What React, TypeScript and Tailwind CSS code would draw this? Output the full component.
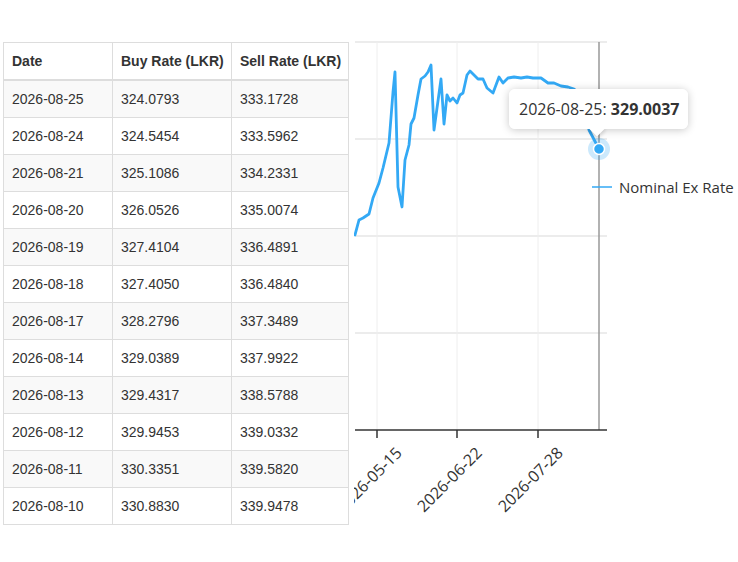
import React from "react";

const rows: [string, string, string][] = [
  ["2026-08-25", "324.0793", "333.1728"],
  ["2026-08-24", "324.5454", "333.5962"],
  ["2026-08-21", "325.1086", "334.2331"],
  ["2026-08-20", "326.0526", "335.0074"],
  ["2026-08-19", "327.4104", "336.4891"],
  ["2026-08-18", "327.4050", "336.4840"],
  ["2026-08-17", "328.2796", "337.3489"],
  ["2026-08-14", "329.0389", "337.9922"],
  ["2026-08-13", "329.4317", "338.5788"],
  ["2026-08-12", "329.9453", "339.0332"],
  ["2026-08-11", "330.3351", "339.5820"],
  ["2026-08-10", "330.8830", "339.9478"],
];

const pts: [number, number][] = [
  [354, 235], [358, 220], [362, 218], [368, 214], [372, 198], [378, 183], [382, 168],
  [388, 143], [392, 92], [394, 72], [397, 187], [401, 207], [404, 160], [408, 145],
  [410, 124], [413, 118], [417, 95], [420, 79], [424, 76], [427, 72], [430, 65],
  [433, 130], [440, 79], [443, 124], [446, 95], [449, 101], [452, 98], [456, 103],
  [459, 95], [462, 93], [466, 75], [469, 71], [475, 77], [477, 79], [482, 79],
  [486, 88], [492, 93], [498, 77], [502, 83], [507, 78], [513, 77], [520, 78],
  [526, 77], [532, 78], [540, 78], [547, 83], [553, 83], [560, 86], [567, 87],
  [573, 89], [580, 95], [585, 115], [588, 130], [598, 149],
];

const ticks: [number, string][] = [
  [376, "2026-05-15"],
  [456, "2026-06-22"],
  [537, "2026-07-28"],
];

export default function App() {
  const cell = "border border-[#dddddd] px-[8px] py-[8px] leading-[20px] text-left whitespace-nowrap";
  return (
    <div className="relative w-[738px] h-[562px] bg-white flex items-start overflow-hidden text-[#333333] font-['Liberation_Sans',Arial,sans-serif] text-[14px]">
      <table className="ml-[3px] mt-[42px] border-collapse table-fixed w-[345px] shrink-0">
        <colgroup>
          <col className="w-[109px]" />
          <col className="w-[119px]" />
          <col className="w-[117px]" />
        </colgroup>
        <thead>
          <tr>
            <th className={`${cell} font-bold border-b-2`}>Date</th>
            <th className={`${cell} font-bold border-b-2`}>Buy Rate (LKR)</th>
            <th className={`${cell} font-bold border-b-2`}>Sell Rate (LKR)</th>
          </tr>
        </thead>
        <tbody>
          {rows.map((r, i) => (
            <tr key={r[0]} className={i % 2 === 0 ? "bg-[#f9f9f9]" : "bg-white"}>
              <td className={cell}>{r[0]}</td>
              <td className={cell}>{r[1]}</td>
              <td className={cell}>{r[2]}</td>
            </tr>
          ))}
        </tbody>
      </table>

      <svg
        className="ml-[5px] shrink-0 font-['Open_Sans',sans-serif]"
        width={385}
        height={562}
        viewBox="353 0 385 562"
      >
        {[42, 139, 236, 333].map((y) => (
          <line key={y} x1={354} x2={606} y1={y} y2={y} stroke="#e6e6e6" strokeWidth={1.5} />
        ))}
        {ticks.map(([x]) => (
          <line key={x} x1={x} x2={x} y1={42} y2={430} stroke="#eeeeee" strokeWidth={1} />
        ))}
        <line x1={598} x2={598} y1={42} y2={430} stroke="#999999" strokeWidth={1.5} />
        <line x1={354} x2={606} y1={430} y2={430} stroke="#333333" strokeWidth={1.5} />
        {ticks.map(([x, label]) => (
          <g key={label}>
            <line x1={x} x2={x} y1={430} y2={438} stroke="#333333" strokeWidth={1.5} />
            <text
              x={x + 26}
              y={454}
              textAnchor="end"
              fontSize={16}
              fill="#333333"
              transform={`rotate(-45 ${x + 26} 454)`}
            >
              {label}
            </text>
          </g>
        ))}
        <polyline
          points={pts.map((p) => p.join(",")).join(" ")}
          fill="none"
          stroke="#33a9f5"
          strokeWidth={2.8}
          strokeLinejoin="round"
          strokeLinecap="round"
        />
        <circle cx={598} cy={149} r={11} fill="#33a9f5" fillOpacity={0.25} />
        <circle cx={598} cy={149} r={5.5} fill="#33a9f5" stroke="#ffffff" strokeWidth={1.5} />
        <line x1={591} x2={611} y1={187} y2={187} stroke="#33a9f5" strokeWidth={1.5} />
        <text x={618} y={192.5} fontSize={15} fill="#333333">
          Nominal Ex Rate
        </text>
      </svg>

      <div className="absolute left-[509px] top-[89px] w-[179px] h-[40px] rounded-[6px] bg-white shadow-[0_1px_8px_rgba(0,0,0,0.22)] font-['Open_Sans',sans-serif] text-[16px] text-[#333333]">
        <div className="absolute left-[82px] top-[33px] w-[12px] h-[12px] rotate-45 bg-white shadow-[2px_2px_4px_rgba(0,0,0,0.15)]" />
        <div className="relative flex h-full items-center px-[10px] rounded-[6px] bg-white whitespace-nowrap">
          <span>2026-08-25:&nbsp;</span>
          <span className="font-bold">329.0037</span>
        </div>
      </div>
    </div>
  );
}
